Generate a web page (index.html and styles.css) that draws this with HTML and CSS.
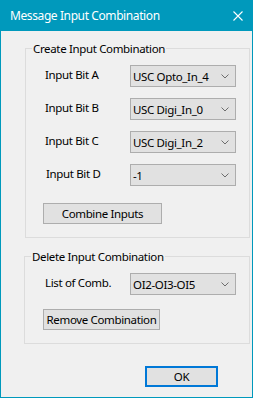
FILE: index.html
```html
<!DOCTYPE html>
<html>
<head>
<meta charset="utf-8">
<link rel="stylesheet" href="styles.css">
</head>
<body>
<div class="window">
  <div class="titlebar">
    <span class="title">Message Input Combination</span>
    <svg class="close" width="10" height="10" viewBox="0 0 10 10"><path d="M0.5 0.5 L9.5 9.5 M9.5 0.5 L0.5 9.5" stroke="#fff" stroke-width="1.1" fill="none"/></svg>
  </div>
  <div class="content">
    <div class="group group-create">
      <div class="legend">Create Input Combination</div>
      <div class="rows">
        <div class="row"><span class="label">Input Bit A</span><div class="combo"><span>USC Opto_In_4</span><svg width="8" height="5" viewBox="0 0 8 5"><path d="M0.5 0.5 L4 4 L7.5 0.5" stroke="#6d6d6d" fill="none"/></svg></div></div>
        <div class="row"><span class="label">Input Bit B</span><div class="combo"><span>USC Digi_In_0</span><svg width="8" height="5" viewBox="0 0 8 5"><path d="M0.5 0.5 L4 4 L7.5 0.5" stroke="#6d6d6d" fill="none"/></svg></div></div>
        <div class="row"><span class="label">Input Bit C</span><div class="combo"><span>USC Digi_In_2</span><svg width="8" height="5" viewBox="0 0 8 5"><path d="M0.5 0.5 L4 4 L7.5 0.5" stroke="#6d6d6d" fill="none"/></svg></div></div>
        <div class="row"><span class="label label-d">Input Bit D</span><div class="combo"><span>-1</span><svg width="8" height="5" viewBox="0 0 8 5"><path d="M0.5 0.5 L4 4 L7.5 0.5" stroke="#6d6d6d" fill="none"/></svg></div></div>
      </div>
      <div class="btn btn-combine">Combine Inputs</div>
    </div>
    <div class="group group-delete">
      <div class="legend">Delete Input Combination</div>
      <div class="rows">
        <div class="row"><span class="label">List of Comb.</span><div class="combo"><span>OI2-OI3-OI5</span><svg width="8" height="5" viewBox="0 0 8 5"><path d="M0.5 0.5 L4 4 L7.5 0.5" stroke="#6d6d6d" fill="none"/></svg></div></div>
      </div>
      <div class="btn btn-remove">Remove Combination</div>
    </div>
    <div class="footer">
      <div class="btn btn-ok">OK</div>
    </div>
  </div>
</div>
</body>
</html>
```
FILE: styles.css
```css
* { box-sizing: border-box; }
html, body { margin: 0; padding: 0; }
body {
  font-family: "Noto Sans", "Open Sans", sans-serif;
  font-size: 11.5px;
  letter-spacing: -0.35px;
  color: #000;
  background: #f0f0f0;
}
.window {
  width: 253px;
  height: 398px;
  border: 1px solid #0099bc;
  background: #f0f0f0;
  display: flex;
  flex-direction: column;
}
.titlebar {
  height: 30px;
  background: #0099bc;
  color: #fff;
  display: flex;
  align-items: center;
  padding-left: 9px;
  padding-right: 9px;
  flex-shrink: 0;
}
.title {
  flex: 1;
  font-size: 12px;
  letter-spacing: -0.4px;
  line-height: 16px;
}
.close { display: block; }
.content {
  display: flex;
  flex-direction: column;
}
.group {
  border: 1px solid #dcdcdc;
  padding-bottom: 13px;
}
.group-create {
  margin: 17px 2px 0 24px;
}
.group-delete {
  margin: 18px 2px 0 23px;
}
.legend {
  width: fit-content;
  margin: -8px 0 0 6px;
  padding: 0 1px;
  background: #f0f0f0;
  line-height: 15px;
  white-space: nowrap;
}
.rows {
  margin-top: 9px;
  display: flex;
  flex-direction: column;
  gap: 11px;
}
.row {
  display: flex;
  align-items: center;
  height: 22px;
}
.group-create .row { padding-left: 19px; }
.group-delete .row { padding-left: 20px; }
.label {
  width: 85px;
  line-height: 15px;
  margin-top: -3px;
  white-space: nowrap;
}
.label-d { padding-left: 1px; }
.combo {
  width: 106px;
  height: 22px;
  background: #e1e1e1;
  border: 1px solid #adadad;
  display: flex;
  align-items: center;
  justify-content: space-between;
  padding: 0 6px 0 2px;
  white-space: nowrap;
}
.combo span { line-height: 15px; }
.combo svg { display: block; margin-top: 1px; }
.btn {
  background: #e1e1e1;
  border: 1px solid #adadad;
  height: 21px;
  display: flex;
  align-items: center;
  justify-content: center;
  line-height: 15px;
  white-space: nowrap;
}
.btn-combine {
  width: 119px;
  margin: 17px 0 0 17px;
}
.btn-remove {
  width: 117px;
  margin: 14px 0 0 18px;
}
.footer {
  display: flex;
  justify-content: flex-end;
  padding-right: 34px;
  margin-top: 22px;
}
.btn-ok {
  width: 73px;
  border: 2px solid #0078d7;
}
```
